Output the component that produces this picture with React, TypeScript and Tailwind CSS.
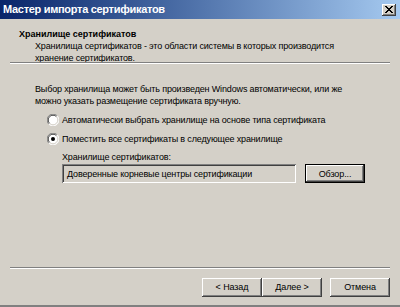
import React from 'react'

const raised =
  'shadow-[inset_-1px_-1px_#404040,inset_1px_1px_#ffffff,inset_-2px_-2px_#808080,inset_2px_2px_#d4d0c8]'

function Radio({ checked }: { checked?: boolean }) {
  return (
    <svg width="12" height="12" viewBox="0 0 12 12" className="shrink-0">
      <circle cx="6" cy="6" r="5.5" fill="#ffffff" />
      <path d="M1.8 10.2 A5.5 5.5 0 0 1 10.2 1.8" stroke="#808080" fill="none" />
      <path d="M10.2 1.8 A5.5 5.5 0 0 1 1.8 10.2" stroke="#ffffff" fill="none" />
      <path d="M2.6 9.4 A4.5 4.5 0 0 1 9.4 2.6" stroke="#404040" fill="none" />
      <path d="M9.4 2.6 A4.5 4.5 0 0 1 2.6 9.4" stroke="#d4d0c8" fill="none" />
      {checked && <circle cx="6" cy="6" r="2" fill="#000000" />}
    </svg>
  )
}

function Button({ children, isDefault }: { children: React.ReactNode; isDefault?: boolean }) {
  if (isDefault) {
    return (
      <div className="border border-black w-[60px] h-[19px] flex">
        <button
          type="button"
          className={`flex-1 flex items-center justify-center bg-[#d4d0c8] text-[9px] tracking-[-0.1px] text-black ${raised}`}
        >
          {children}
        </button>
      </div>
    )
  }
  return (
    <button
      type="button"
      className={`w-[60px] h-[19px] flex items-center justify-center bg-[#d4d0c8] text-[9px] tracking-[-0.1px] text-black ${raised}`}
    >
      {children}
    </button>
  )
}

function Separator() {
  return (
    <div className="mx-[10px] h-[2px] flex flex-col">
      <div className="h-px bg-[#808080]" />
      <div className="h-px bg-white" />
    </div>
  )
}

export default function App() {
  return (
    <div
      className="w-[400px] h-[307px] bg-[#d4d0c8] flex flex-col border-b-2 border-[#808080] overflow-hidden text-black whitespace-nowrap"
      style={{ fontFamily: '"Liberation Sans", Arial, sans-serif' }}
    >
      {/* Title bar */}
      <div className="h-[19px] shrink-0 flex items-center justify-between bg-gradient-to-r from-[#0a246a] to-[#a6caf0] pl-[3px] pr-[4px]">
        <span className="text-white text-[11px] font-bold leading-none tracking-[-0.3px]">Мастер импорта сертификатов</span>
        <div className={`w-[14px] h-[12px] bg-[#d4d0c8] flex items-center justify-center ${raised}`}>
          <svg width="8" height="7" viewBox="0 0 8 7">
            <path
              d="M0 0h2v1h1v1h2v-1h1v-1h2v1h-1v1h-1v1h-1v1h1v1h1v1h1v1h-2v-1h-1v-1h-2v1h-1v1h-2v-1h1v-1h1v-1h1v-1h-1v-1h-1v-1h-1z"
              fill="#000000"
            />
          </svg>
        </div>
      </div>

      {/* Header */}
      <div className="h-[43px] shrink-0 pt-[9px] text-[9px] tracking-[-0.15px] leading-[12px]">
        <div className="pl-[19px] font-bold tracking-[0px]">Хранилище сертификатов</div>
        <div className="pl-[35px]">
          Хранилища сертификатов - это области системы в которых производится
          <br />
          хранение сертификатов.
        </div>
      </div>
      <Separator />

      {/* Body */}
      <div className="pt-[19px] pl-[35px] text-[9px] tracking-[-0.15px] leading-[12px]">
        <p>
          Выбор хранилища может быть произведен Windows автоматически, или же
          <br />
          можно указать размещение сертификата вручную.
        </p>
        <div className="mt-[7px] pl-[12px] flex flex-col gap-[7px]">
          <div className="h-[12px] flex items-center gap-[3px]">
            <Radio />
            <span>Автоматически выбрать хранилище на основе типа сертификата</span>
          </div>
          <div className="h-[12px] flex items-center gap-[3px]">
            <Radio checked />
            <span>Поместить все сертификаты в следующее хранилище</span>
          </div>
        </div>
        <div className="mt-[6px] pl-[27px]">
          <div>Хранилище сертификатов:</div>
          <div className="mt-px flex items-center gap-[9px]">
            <div className="w-[234px] h-[19px] flex items-center pl-[5px] bg-[#d4d0c8] shadow-[inset_1px_1px_#808080,inset_-1px_-1px_#ffffff,inset_2px_2px_#404040,inset_-2px_-2px_#d4d0c8]">
              Доверенные корневые центры сертификации
            </div>
            <Button isDefault>Обзор...</Button>
          </div>
        </div>
      </div>

      {/* Footer */}
      <div className="mt-auto shrink-0">
        <Separator />
        <div className="pt-[9px] pb-[8px] pr-[10px] flex justify-end">
          <div className="flex">
            <Button>&lt; Назад</Button>
            <Button>Далее &gt;</Button>
          </div>
          <div className="ml-[8px]">
            <Button>Отмена</Button>
          </div>
        </div>
      </div>
    </div>
  )
}
